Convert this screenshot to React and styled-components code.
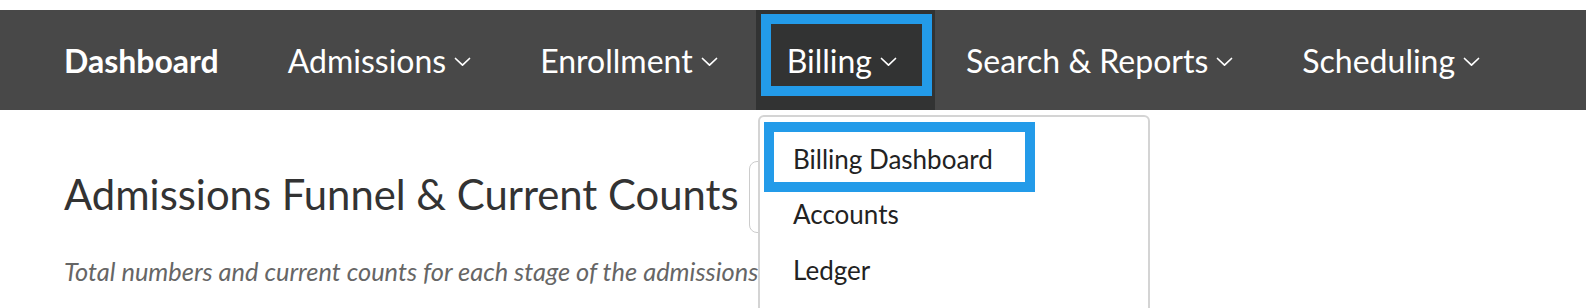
import React from 'react'
import styled, { createGlobalStyle } from 'styled-components'

const GlobalStyle = createGlobalStyle`
  html, body {
    margin: 0;
    padding: 0;
    background: #ffffff;
    font-family: Lato, "Open Sans", sans-serif;
  }
  body {
    padding-top: 10px;
    overflow: hidden;
  }
`

const Page = styled.div`
  position: relative;
  width: 1586px;
  height: 298px;
  overflow: hidden;
`

const NavBar = styled.nav`
  display: flex;
  align-items: stretch;
  height: 100px;
  background: #484848;
  padding-left: 33px;
`

const NavItem = styled.div`
  position: relative;
  display: flex;
  align-items: center;
  padding: 0 38px 0 31px;
  color: #ffffff;
  font-size: 32px;
  font-weight: ${p => (p.$bold ? 700 : 400)};
  background: ${p => (p.$active ? '#323333' : 'transparent')};
  white-space: nowrap;
`

const Chevron = styled.svg`
  width: 17px;
  height: 10px;
  margin-left: 8px;
  margin-top: 3px;
`

const Highlight = styled.div`
  position: absolute;
  border: 10px solid #239be9;
  pointer-events: none;
`

const Content = styled.main`
  padding: 51px 0 0 64px;
`

const TitleRow = styled.div`
  display: flex;
  align-items: center;
  gap: 10px;
`

const Title = styled.h1`
  margin: 0 0 6px;
  font-size: 41.8px;
  font-weight: 400;
  color: #333333;
  white-space: nowrap;
`

const FilterBox = styled.div`
  width: 200px;
  height: 70px;
  border: 1px solid #cccccc;
  border-radius: 8px;
`

const Subtitle = styled.p`
  margin: 23px 0 0;
  font-size: 25.4px;
  font-style: italic;
  color: #666666;
  white-space: nowrap;
`

const Dropdown = styled.ul`
  position: absolute;
  top: 105px;
  left: 758px;
  width: 388px;
  height: 260px;
  margin: 0;
  padding: 14px 0 0;
  list-style: none;
  background: #ffffff;
  border: 2px solid #d4d4d4;
  border-radius: 6px;
`

const DropItem = styled.li`
  position: relative;
  display: flex;
  align-items: center;
  height: 55.5px;
  padding-left: 33px;
  font-size: 26px;
  color: #222222;
`

const ChevronIcon = () => (
  <Chevron viewBox="0 0 17 10" fill="none">
    <path d="M1.5 1.5 L8.5 8.2 L15.5 1.5" stroke="#ffffff" strokeWidth="1.7" strokeLinecap="round" strokeLinejoin="round" />
  </Chevron>
)

const navItems = [
  { label: 'Dashboard', bold: true },
  { label: 'Admissions', menu: true },
  { label: 'Enrollment', menu: true },
  { label: 'Billing', menu: true, active: true },
  { label: 'Search & Reports', menu: true },
  { label: 'Scheduling', menu: true },
]

export default function App() {
  return (
    <Page>
      <GlobalStyle />
      <NavBar>
        {navItems.map(item => (
          <NavItem key={item.label} $bold={item.bold} $active={item.active}>
            {item.label}
            {item.menu && <ChevronIcon />}
            {item.active && <Highlight style={{ left: 5, right: 3, top: 4, bottom: 14 }} />}
          </NavItem>
        ))}
      </NavBar>
      <Content>
        <TitleRow>
          <Title>Admissions Funnel &amp; Current Counts</Title>
          <FilterBox />
        </TitleRow>
        <Subtitle>Total numbers and current counts for each stage of the admissions</Subtitle>
      </Content>
      <Dropdown>
        <DropItem>
          Billing Dashboard
          <Highlight style={{ left: 4, top: -9, width: 251, height: 50 }} />
        </DropItem>
        <DropItem>Accounts</DropItem>
        <DropItem>Ledger</DropItem>
      </Dropdown>
    </Page>
  )
}
